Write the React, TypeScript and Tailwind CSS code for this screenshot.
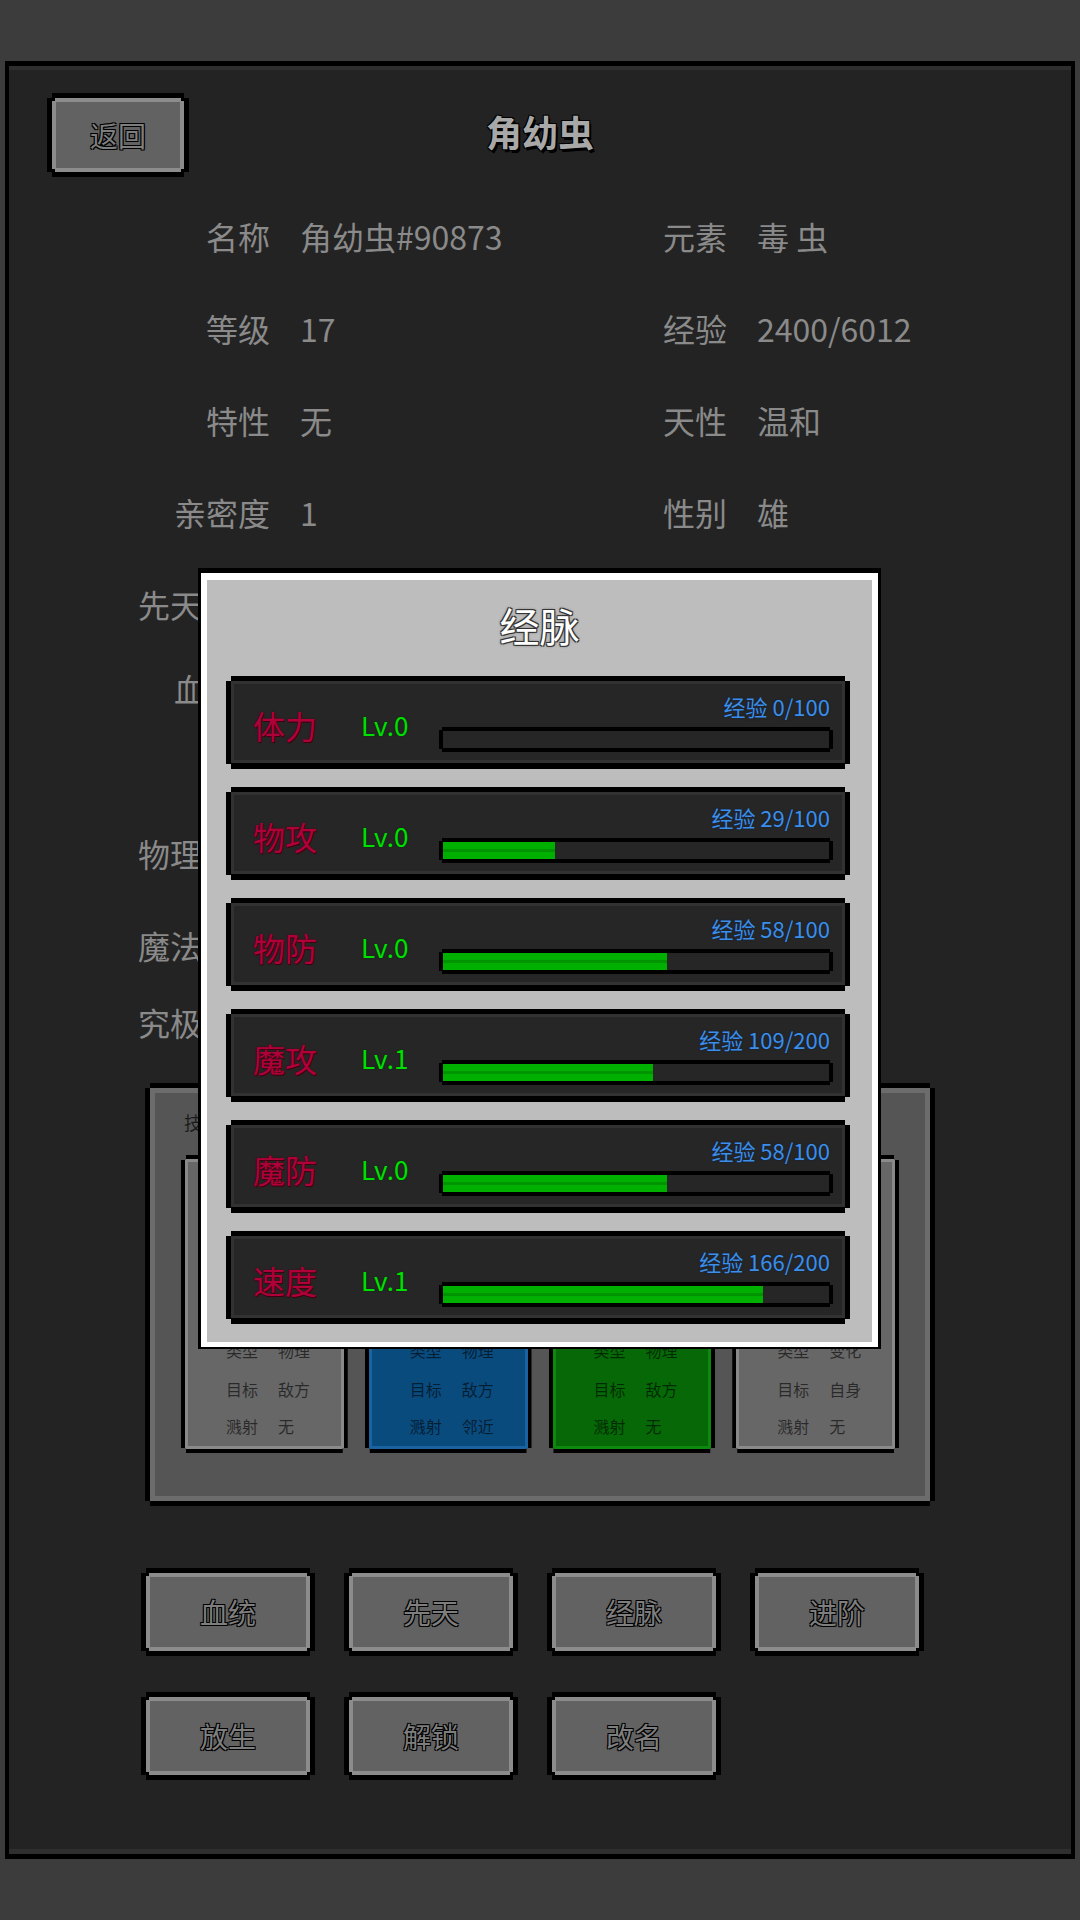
import type { ReactNode } from 'react';

const notch5 =
  '[clip-path:polygon(0_5px,5px_5px,5px_0,calc(100%_-_5px)_0,calc(100%_-_5px)_5px,100%_5px,100%_calc(100%_-_5px),calc(100%_-_5px)_calc(100%_-_5px),calc(100%_-_5px)_100%,5px_100%,5px_calc(100%_-_5px),0_calc(100%_-_5px))]';
const notch3 =
  '[clip-path:polygon(0_3px,3px_3px,3px_0,calc(100%_-_3px)_0,calc(100%_-_3px)_3px,100%_3px,100%_calc(100%_-_3px),calc(100%_-_3px)_calc(100%_-_3px),calc(100%_-_3px)_100%,3px_100%,3px_calc(100%_-_3px),0_calc(100%_-_3px))]';

const outline = '[text-shadow:1px_1px_0_#000,-1px_1px_0_#000,1px_-1px_0_#000,-1px_-1px_0_#000]';

const info = [
  ['名称', '角幼虫#90873', '元素', '毒 虫'],
  ['等级', '17', '经验', '2400/6012'],
  ['特性', '无', '天性', '温和'],
  ['亲密度', '1', '性别', '雄'],
];

const meridians = [
  { name: '体力', lv: 0, exp: 0, max: 100 },
  { name: '物攻', lv: 0, exp: 29, max: 100 },
  { name: '物防', lv: 0, exp: 58, max: 100 },
  { name: '魔攻', lv: 1, exp: 109, max: 200 },
  { name: '魔防', lv: 0, exp: 58, max: 100 },
  { name: '速度', lv: 1, exp: 166, max: 200 },
];

const skills = [
  { name: '撞击', ring: 'bg-[#8a8a8a]', fill: 'bg-[#676767]', type: '物理', target: '敌方', splash: '无' },
  { name: '毒针', ring: 'bg-[#1b62a0]', fill: 'bg-[#0a4b7d]', type: '物理', target: '敌方', splash: '邻近' },
  { name: '缠绕', ring: 'bg-[#0d8a0d]', fill: 'bg-[#066806]', type: '物理', target: '敌方', splash: '无' },
  { name: '硬化', ring: 'bg-[#8a8a8a]', fill: 'bg-[#676767]', type: '变化', target: '自身', splash: '无' },
];

function PixelButton({ children, className = '' }: { children: ReactNode; className?: string }) {
  return (
    <div className={`bg-black p-[5px] ${notch5} ${className}`}>
      <div className={`h-full bg-[#8c8c8c] p-[4px] ${notch3}`}>
        <div className={`flex h-full items-center justify-center bg-[#626262] text-[28px] text-[#7e7e7e] ${outline}`}>
          {children}
        </div>
      </div>
    </div>
  );
}

function MeridianRow({ name, lv, exp, max }: { name: string; lv: number; exp: number; max: number }) {
  return (
    <div className={`h-[93px] bg-black pt-[5px] px-[5px] pb-[6px] ${notch5}`}>
      <div className="h-full bg-[#323232] p-[3px]">
        <div className="flex h-full bg-[#262626]">
          <div className="flex w-[127px] items-center pl-[19px] pt-[6px] text-[32px] leading-none text-[#b0003a] [text-shadow:0_0_2px_#4a0012,1px_1px_0_#3a000e]">
            {name}
          </div>
          <div className="flex w-[78px] items-center pt-[5px] text-[26px] leading-none text-[#00e000] [text-shadow:0_0_2px_#003000]">
            Lv.{lv}
          </div>
          <div className="flex w-[394px] flex-col pt-[9px]">
            <div className="h-[26px] pr-[3px] text-right text-[22px] leading-[26px] text-[#3c8ee8] [text-shadow:0_0_2px_#0a2040]">
              经验 {exp}/{max}
            </div>
            <div className={`mt-[8px] h-[25px] bg-black p-[4px] ${notch3}`}>
              <div className="h-full bg-[#262626]">
                <div
                  className="h-full bg-[linear-gradient(#00b000_0,#00b000_40%,#009400_40%,#009400_60%,#00b000_60%)]"
                  style={{ width: `${(exp / max) * 100}%` }}
                />
              </div>
            </div>
          </div>
        </div>
      </div>
    </div>
  );
}

export default function App() {
  return (
    <div className="relative h-[1920px] w-[1080px] bg-[#3c3c3c] px-[5px] pt-[61px] [font-family:'Noto_Sans_CJK_SC','Noto_Sans',sans-serif]">
      <div className="h-[1798px] bg-black px-[4px] pt-[5px] pb-[5px]">
        <div className="h-full border-t-[4px] border-b-[5px] border-[#2f2f2f] bg-[#232323]">
          {/* header */}
          <div className="mt-[23px] grid h-[84px] grid-cols-[1fr_auto_1fr] items-center">
            <PixelButton className="ml-[38px] h-[84px] w-[142px]">返回</PixelButton>
            <div className="mb-[8px] text-[36px] font-bold text-[#a8a8a8] [text-shadow:1px_1px_0_#000,-1px_1px_0_#000,1px_-1px_0_#000,-1px_-1px_0_#000,2px_3px_0_#000]">
              角幼虫
            </div>
            <div />
          </div>

          {/* info */}
          <div className="mt-[13px] text-[32px] text-[#8a8a8a]">
            {info.map(([l1, v1, l2, v2]) => (
              <div key={l1} className="flex h-[92px] items-center whitespace-nowrap">
                <div className="w-[261px] text-right">{l1}</div>
                <div className="w-[389px] pl-[30px]">{v1}</div>
                <div className="w-[68px] text-right">{l2}</div>
                <div className="pl-[30px]">{v2}</div>
              </div>
            ))}
            <div className="flex h-[92px] items-center pl-[129px]">先天</div>
            <div className="flex h-[76px] items-center">
              <div className="w-[261px] text-right">血统值</div>
            </div>
            <div className="h-[81px]" />
            <div className="flex h-[92px] items-center pl-[129px]">物理</div>
            <div className="flex h-[92px] items-center pl-[129px]">魔法</div>
            <div className="flex h-[62px] items-center pl-[129px]">究极</div>
          </div>

          {/* skills panel */}
          <div className={`mx-auto mt-[30px] h-[423px] w-[790px] bg-black p-[5px] ${notch5}`}>
            <div className="h-full border-[5px] border-[#6c6c6c] bg-[#555555] px-[26px]">
              <div className="h-[62px] pt-[20px] pl-[3px] text-[18px] leading-none text-black/70">技能</div>
              <div className="grid grid-cols-4 gap-[17px]">
                {skills.map((s) => (
                  <div key={s.name} className={`h-[298px] bg-black p-[4px] ${notch5}`}>
                    <div className={`h-full p-[3px] ${s.ring}`}>
                      <div className={`flex h-full flex-col ${s.fill} text-[16px] text-black/60`}>
                        <div className="mt-[30px] text-center text-[20px] text-black/70">{s.name}</div>
                        <div className="mt-[118px] flex h-[20px] items-center">
                          <span className="w-[78px] pl-[38px]">类型</span>
                          <span className="pl-[12px]">{s.type}</span>
                        </div>
                        <div className="mt-[19px] flex h-[20px] items-center">
                          <span className="w-[78px] pl-[38px]">目标</span>
                          <span className="pl-[12px]">{s.target}</span>
                        </div>
                        <div className="mt-[17px] flex h-[20px] items-center">
                          <span className="w-[78px] pl-[38px]">溅射</span>
                          <span className="pl-[12px]">{s.splash}</span>
                        </div>
                      </div>
                    </div>
                  </div>
                ))}
              </div>
            </div>
          </div>

          {/* action buttons */}
          <div className="ml-[132px] mt-[62px] grid w-[783px] grid-cols-4 gap-x-[29px] gap-y-[36px]">
            {['血统', '先天', '经脉', '进阶', '放生', '解锁', '改名'].map((t) => (
              <PixelButton key={t} className="h-[88px]">
                {t}
              </PixelButton>
            ))}
          </div>
        </div>
      </div>

      {/* meridian dialog */}
      <div className="absolute left-[198px] top-[568px] h-[781px] w-[683px] bg-black px-[3px] pt-[5px] pb-[2px]">
        <div className="h-full bg-white px-[6px] pt-[7px] pb-[5px]">
          <div className="h-full bg-[#bdbdbd] px-[19px]">
            <div className="flex h-[96px] items-center justify-center pb-[6px] text-[40px] text-white [text-shadow:1px_1px_0_#333,-1px_1px_0_#333,1px_-1px_0_#333,-1px_-1px_0_#333,0_0_3px_#222]">
              经脉
            </div>
            <div className="flex w-[624px] flex-col gap-[18px]">
              {meridians.map((m) => (
                <MeridianRow key={m.name} {...m} />
              ))}
            </div>
          </div>
        </div>
      </div>
    </div>
  );
}
